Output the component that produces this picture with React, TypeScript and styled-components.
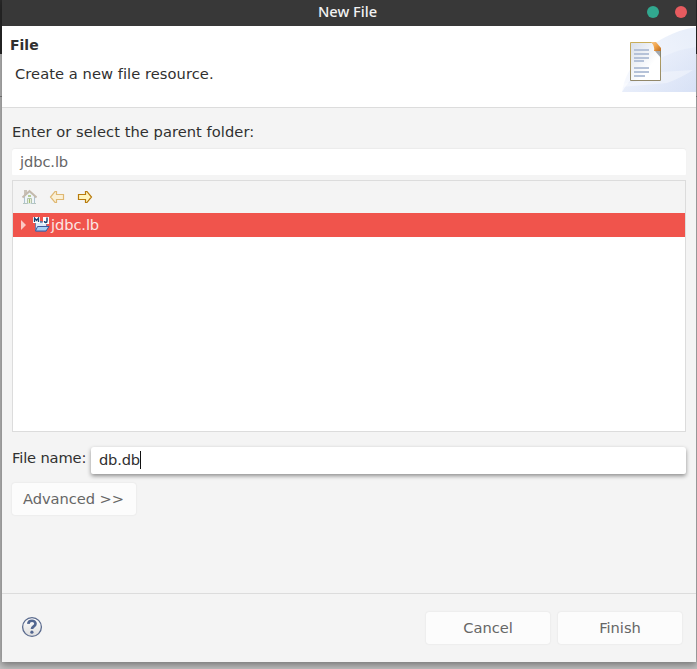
import React from 'react';
import styled, { createGlobalStyle } from 'styled-components';

const GlobalStyle = createGlobalStyle`
  * { box-sizing: border-box; }
  html, body { margin: 0; overflow: hidden; }
  body { font-family: "DejaVu Sans", sans-serif; font-size: 14.67px; color: #303030; font-variant-ligatures: none; }
`;

const Desktop = styled.div`
  width: 697px;
  height: 669px;
  padding: 0 1px 0 2px;
  overflow: hidden;
  background: linear-gradient(#2b2b2b 0 54px, #c4c4c4 54px 96px, #888 96px 97px, #c4c4c4 97px);
`;

const Dialog = styled.main`
  height: 662px;
  display: flex;
  flex-direction: column;
  background: #f4f4f4;
  box-shadow: 0 2px 8px 1px rgba(0, 0, 0, 0.42);
`;

const TitleBar = styled.header`
  flex: 0 0 26px;
  display: grid;
  grid-template-columns: 1fr auto 1fr;
  align-items: center;
  padding: 0 9px 2px;
  background: #383838;
  color: #f2f2f2;
`;

const Title = styled.h1`
  grid-column: 2;
  margin: 0 3px 1px 0;
  font: 500 14.67px/23px "Noto Sans", sans-serif;
  white-space: nowrap;
`;

const Controls = styled.div`
  display: flex;
  justify-content: flex-end;
  gap: 16px;
`;

const Dot = styled.span<{ $color: string }>`
  width: 12px;
  height: 12px;
  border-radius: 50%;
  background: ${(p) => p.$color};
`;

const Banner = styled.section`
  flex: 0 0 82px;
  display: flex;
  justify-content: space-between;
  background: #fff;
  border-bottom: 1px solid #dcdcdc;
`;

const BannerText = styled.div`
  padding: 10px 8px;
`;

const Heading = styled.h2`
  margin: 0;
  font-size: 14px;
  line-height: 19px;
`;

const Description = styled.p`
  margin: 9px 0 0 5px;
  line-height: 20px;
  letter-spacing: 0.06px;
`;

const Body = styled.section`
  flex: 1;
  padding: 14px 10px 0 10px;
  display: flex;
  flex-direction: column;
  align-items: stretch;
`;

const Label = styled.label`
  line-height: 20px;
  white-space: nowrap;
  letter-spacing: 0.05px;
`;

const FolderField = styled.div`
  height: 26px;
  margin: 7px 0 5px;
  padding: 0 8px;
  line-height: 26px;
  letter-spacing: -0.1px;
  color: #666;
  background: #fff;
  border-radius: 3px 3px 1px 1px;
  box-shadow: 0 -1px 1px #ececec;
`;

const Tree = styled.div`
  height: 252px;
  border: 1px solid #dcdcdc;
  background: #fff;
`;

const Toolbar = styled.div`
  height: 32px;
  padding: 8px 0 0 8px;
  display: flex;
  gap: 12px;
  background: #f4f4f4;
`;

const TreeRow = styled.div`
  height: 24px;
  padding-left: 7px;
  display: flex;
  align-items: center;
  background: #f0544c;
  color: #fbe6e4;
`;

const RowText = styled.span`
  padding-bottom: 2px;
  letter-spacing: -0.1px;
`;

const RowIcon = styled.svg`
  margin: 0 1px 1px 5px;
`;

const NameRow = styled.div`
  display: flex;
  margin-top: 14px;
  justify-content: space-between;
`;

const NameLabel = styled(Label)`
  padding-top: 2px;
  letter-spacing: -0.15px;
`;

const NameField = styled.div`
  width: 595px;
  height: 27px;
  display: flex;
  align-items: center;
  padding: 0 8px 2px;
  margin-top: 1px;
  letter-spacing: -0.2px;
  background: #fff;
  border-radius: 3px 3px 2px 2px;
  box-shadow: 0 2px 4px rgba(0, 0, 0, 0.42);
`;

const Caret = styled.span`
  width: 1px;
  height: 18px;
  background: #111;
`;

const Button = styled.button`
  width: 124px;
  height: 32px;
  padding: 0 0 1px;
  border: 0;
  border-radius: 3px;
  background: #fcfcfc;
  color: #666;
  font: inherit;
  letter-spacing: -0.05px;
  font-variant-ligatures: none;
  box-shadow: 0 0 2px rgba(0, 0, 0, 0.1);
`;

const AdvancedButton = styled(Button)`
  margin-top: 9px;
  padding: 0 1px 2px 0;
`;

const Footer = styled.footer`
  flex: 0 0 69px;
  display: flex;
  align-items: center;
  gap: 8px;
  padding: 0 14px 1px 19px;
  border-top: 1px solid #dcdcdc;
`;

const HelpIcon = styled.svg`
  margin: 0 auto 2px 0;
`;

const BannerArt = () => (
  <svg width="75" height="81" viewBox="0 0 75 81">
    <defs>
      <linearGradient id="sky" x1="0" y1="1" x2="1" y2=".3">
        <stop offset="0" stopColor="#f7f9fe" />
        <stop offset="1" stopColor="#e9effa" />
      </linearGradient>
      <linearGradient id="sweep" x1="0" y1="0" x2="1" y2="1">
        <stop offset="0" stopColor="#f3f6fd" />
        <stop offset="1" stopColor="#c9d6f2" />
      </linearGradient>
      <linearGradient id="page" x1="0" y1="0" x2="1" y2="1">
        <stop offset="0" stopColor="#d8dfea" />
        <stop offset=".65" stopColor="#fff" />
      </linearGradient>
      <linearGradient id="frame" x1="0" y1="0" x2="0" y2="1">
        <stop offset="0" stopColor="#c9ad58" />
        <stop offset="1" stopColor="#92886a" />
      </linearGradient>
      <linearGradient id="curl" x1="0" y1="0" x2="1" y2="1">
        <stop offset="0" stopColor="#f8c98c" />
        <stop offset=".5" stopColor="#ef9f43" />
        <stop offset="1" stopColor="#b96c24" />
      </linearGradient>
    </defs>
    <path d="M1 66C4 42 28 9 75 1V66Z" fill="url(#sky)" />
    <path d="M1 66C15 42 45 25 75 21V66Z" fill="url(#sweep)" opacity=".6" />
    <path d="M40 46L72 44Q60 52 46 57L1 61L1 58L40 51Z" fill="#fff" opacity=".35" />
    <path d="M9.500 16.500H31L39.500 25V54.500H9.500Z" fill="url(#page)" stroke="url(#frame)" />
    <path d="M13 24H28M13 28H28M13 32H28M13 35H23M13 42H28M13 46H28M13 50H24" stroke="#b5c2d8" strokeWidth="2" />
    <path d="M34 25L40 32V24Z" fill="#67717c" opacity=".6" />
    <path d="M30 16H35L40 22V25H33Q34 20 30 16Z" fill="url(#curl)" />
  </svg>
);

const HomeIcon = () => (
  <svg width="16" height="16" viewBox="0 0 16 16">
    <path d="M3.500 7V14.500H13.500V7L8.500 3Z" fill="#f0f5f8" stroke="#afc3d0" />
    <path d="M3 1H6V5L3 7Z" fill="#c9c2b8" />
    <path d="M1.500 8.500L8.500 2L15.500 8.500" fill="none" stroke="#c4baad" strokeWidth="2" />
    <path d="M6.500 14.500V9.500H10.500V14.500" fill="#fff" stroke="#b3c3ac" />
    <path d="M8.500 10V14M7 7H10" stroke="#a3bf72" strokeWidth="1.500" />
    <path d="M2 14.500H5M12 14.500H15" stroke="#b5c6bd" />
  </svg>
);

const ArrowIcon = ({ forward = false }: { forward?: boolean }) => (
  <svg width="16" height="16" viewBox="0 0 16 16">
    <path
      d={forward
        ? 'M1.500 5.500H8.500V2.500H10L14.500 8L10 13.500H8.500V10.500H1.500Z'
        : 'M14.500 5.500H7.500V2.500H6L1.500 8L6 13.500H7.500V10.500H14.500Z'}
      fill={forward ? '#fff4bd' : '#fbf0d6'}
      stroke={forward ? '#b77a0b' : '#dfb873'}
      strokeWidth="1.200"
    />
  </svg>
);

const ProjectIcon = () => (
  <RowIcon width="17" height="16" viewBox="0 0 17 16">
    <path d="M2.500 5H13.500V14H2.500Z" fill="#dcebf8" stroke="#6e7fae" />
    <path d="M4.500 9.500H16L13 14H2.500Z" fill="#a7d2f5" stroke="#3d579c" />
    <path d="M0 0H7V6H0ZM10 0H16V7H10Z" fill="#fff" />
    <path d="M7 4H9V5.500H7Z" fill="#5b7fa8" />
    <path d="M1.500 5V1L3.500 3.500L5.500 1V5" fill="none" stroke="#174675" strokeWidth="1.300" />
    <path d="M14 .5V4Q14 5.500 12.700 5.500Q11.500 5.500 11.500 4" fill="none" stroke="#174675" strokeWidth="1.500" />
  </RowIcon>
);

export default function App() {
  return (
    <>
      <GlobalStyle />
      <Desktop>
        <Dialog>
          <TitleBar>
            <span />
            <Title>New File</Title>
            <Controls>
              <Dot $color="#31a88f" />
              <Dot $color="#e75b5f" />
            </Controls>
          </TitleBar>
          <Banner>
            <BannerText>
              <Heading>File</Heading>
              <Description>Create a new file resource.</Description>
            </BannerText>
            <BannerArt />
          </Banner>
          <Body>
            <Label>Enter or select the parent folder:</Label>
            <FolderField>jdbc.lb</FolderField>
            <Tree>
              <Toolbar>
                <HomeIcon />
                <ArrowIcon />
                <ArrowIcon forward />
              </Toolbar>
              <TreeRow>
                <svg width="8" height="10" viewBox="0 0 8 10">
                  <path d="M1 0L6 5L1 10Z" fill="#fbc9c5" />
                </svg>
                <ProjectIcon />
                <RowText>jdbc.lb</RowText>
              </TreeRow>
            </Tree>
            <NameRow>
              <NameLabel>File name:</NameLabel>
              <NameField>db.db<Caret /></NameField>
            </NameRow>
            <AdvancedButton>Advanced &gt;&gt;</AdvancedButton>
          </Body>
          <Footer>
            <HelpIcon width="22" height="22" viewBox="0 0 22 22">
              <defs>
                <linearGradient id="help" x1="0" y1="0" x2="0" y2="1">
                  <stop offset="0" stopColor="#fff" />
                  <stop offset="1" stopColor="#dedede" />
                </linearGradient>
              </defs>
              <circle cx="11" cy="11" r="9.400" fill="url(#help)" stroke="#5b6b8e" strokeWidth="1.300" />
              <path d="M7.300 7.800C7.600 3.800 14.500 3.700 14.500 7.800C14.500 10.500 11 10.300 11 13" fill="none" stroke="#526690" strokeWidth="2.700" />
              <circle cx="10.900" cy="16.200" r="1.600" fill="#526690" />
            </HelpIcon>
            <Button>Cancel</Button>
            <Button>Finish</Button>
          </Footer>
        </Dialog>
      </Desktop>
    </>
  );
}
